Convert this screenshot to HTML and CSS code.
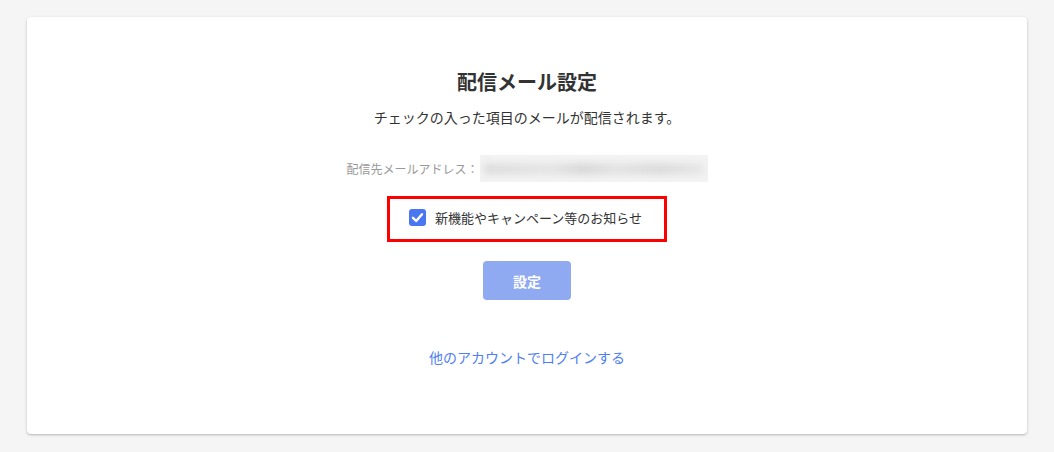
FILE: index.html
```html
<!DOCTYPE html>
<html lang="ja">
<head>
<meta charset="utf-8">
<title>配信メール設定</title>
<link rel="stylesheet" href="styles.css">
</head>
<body>
<div class="page">
  <main class="card">
    <h1 class="title">配信メール設定</h1>
    <p class="lead">チェックの入った項目のメールが配信されます。</p>
    <div class="address">
      <span class="address-label">配信先メールアドレス：</span>
      <span class="address-value"><span class="blur"></span></span>
    </div>
    <label class="option">
      <span class="check">
        <svg width="17" height="17" viewBox="0 0 17 17"><path d="M4 8.8 L7.2 12 L13 5.2" fill="none" stroke="#fff" stroke-width="2.4" stroke-linecap="round" stroke-linejoin="round"/></svg>
      </span>
      <span class="option-text">新機能やキャンペーン等のお知らせ</span>
    </label>
    <button class="submit" type="button">設定</button>
    <a class="link" href="#">他のアカウントでログインする</a>
  </main>
</div>
</body>
</html>
```

FILE: styles.css
```css
html, body {
  margin: 0;
  padding: 0;
  background: #f5f5f5;
  font-family: "Noto Sans CJK JP", "Noto Sans", sans-serif;
  color: #333;
}
.page {
  padding: 17px 0 18px;
  display: flex;
  justify-content: center;
}
.card {
  width: 1000px;
  box-sizing: border-box;
  background: #fff;
  border-radius: 4px;
  box-shadow: 0 1px 3px rgba(0,0,0,0.22), 0 1px 1px rgba(0,0,0,0.06);
  padding: 51px 0 67px;
  display: flex;
  flex-direction: column;
  align-items: center;
}
.title {
  margin: 0;
  font-size: 20px;
  line-height: 28px;
  font-weight: 700;
  color: #333;
}
.lead {
  margin: 11px 0 0;
  font-size: 14px;
  line-height: 20px;
  color: #333;
}
.address {
  margin-top: 28px;
  display: flex;
  align-items: center;
  height: 27px;
  padding-right: 0;
}
.address-label {
  font-size: 12px;
  color: #999;
  line-height: 16px;
}
.address-value {
  width: 228px;
  height: 27px;
  margin-left: 1px;
  background: #f3f3f3;
  overflow: hidden;
  display: flex;
  align-items: center;
}
.blur {
  display: block;
  width: 220px;
  height: 12px;
  margin-left: 4px;
  background: linear-gradient(to right, #dedede, #e6e6e6 30%, #d9d9d9 45%, #e4e4e4 60%, #dcdcdc 80%, #e8e8e8);
  filter: blur(3px);
}
.option {
  margin-top: 14px;
  box-sizing: border-box;
  width: 280px;
  height: 46px;
  border: 3px solid #ff0000;
  display: flex;
  align-items: center;
  padding: 0 0 0 19px;
  gap: 9px;
  cursor: pointer;
}
.check {
  width: 17px;
  height: 17px;
  border-radius: 3px;
  background: #4a77f1;
  display: flex;
  margin-top: -3px;
}
.option-text {
  font-size: 13px;
  line-height: 18px;
  color: #333;
  margin-top: -3px;
}
.submit {
  margin-top: 19px;
  width: 88px;
  height: 39px;
  border: none;
  border-radius: 4px;
  background: #90aaf2;
  color: #fff;
  font-family: inherit;
  font-size: 14px;
  font-weight: 700;
  padding: 0;
}
.link {
  margin-top: 47px;
  font-size: 14px;
  line-height: 20px;
  color: #4f7ef2;
  text-decoration: none;
}
```
